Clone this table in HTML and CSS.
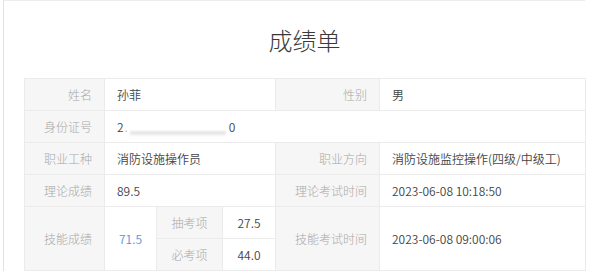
FILE: index.html
```html
<!DOCTYPE html>
<html lang="zh">
<head>
<meta charset="utf-8">
<link rel="stylesheet" href="styles.css">
</head>
<body>
<div class="card">
  <h1 class="title">成绩单</h1>
  <table class="grid">
    <colgroup>
      <col class="c1"><col class="c2"><col class="c3"><col class="c4"><col class="c5"><col class="c6">
    </colgroup>
    <tr>
      <td class="lbl">姓名</td>
      <td class="val" colspan="3">孙菲</td>
      <td class="lbl">性别</td>
      <td class="val">男</td>
    </tr>
    <tr>
      <td class="lbl">身份证号</td>
      <td class="val" colspan="5">2<span class="dot">.</span><span class="blur"></span>0</td>
    </tr>
    <tr>
      <td class="lbl">职业工种</td>
      <td class="val" colspan="3">消防设施操作员</td>
      <td class="lbl">职业方向</td>
      <td class="val">消防设施监控操作(四级/中级工)</td>
    </tr>
    <tr>
      <td class="lbl">理论成绩</td>
      <td class="val" colspan="3">89.5</td>
      <td class="lbl">理论考试时间</td>
      <td class="val">2023-06-08 10:18:50</td>
    </tr>
    <tr>
      <td class="lbl" rowspan="2">技能成绩</td>
      <td class="val center score" rowspan="2">71.5</td>
      <td class="lbl center">抽考项</td>
      <td class="val center">27.5</td>
      <td class="lbl" rowspan="2">技能考试时间</td>
      <td class="val" rowspan="2">2023-06-08 09:00:06</td>
    </tr>
    <tr>
      <td class="lbl center">必考项</td>
      <td class="val center">44.0</td>
    </tr>
  </table>
</div>
</body>
</html>
```

FILE: styles.css
```css
html, body {
  margin: 0;
  padding: 0;
  background: #ffffff;
  overflow: hidden;
}
body {
  font-family: "Noto Sans CJK SC", "Noto Sans", sans-serif;
  color: #333333;
}
.card {
  margin-left: 3px;
  width: 561px;
  border-left: 1px solid #e2e2e2;
  border-top: 1px solid #ececec;
  padding: 0 0 0 20px;
  background: #ffffff;
}
.title {
  margin: 0;
  padding-top: 23px;
  height: 32px;
  margin-bottom: 22px;
  font-size: 24px;
  line-height: 32px;
  font-weight: 300;
  text-align: center;
  color: #3a3a3a;
}
.grid {
  width: 561px;
  border-collapse: collapse;
  table-layout: fixed;
  font-size: 12px;
  font-weight: 300;
}
.c1 { width: 80px; }
.c2 { width: 52px; }
.c3 { width: 66px; }
.c4 { width: 53px; }
.c5 { width: 104px; }
.c6 { width: 206px; }
.grid td {
  border: 1px solid #ebebeb;
  height: 31px;
  padding: 0;
  white-space: nowrap;
  overflow: hidden;
}
.lbl {
  background: #f6f6f6;
  color: #a8a8a8;
  text-align: right;
  padding-right: 12px !important;
}
.val {
  color: #444444;
  font-weight: 350;
  padding-left: 12px !important;
}
.center {
  text-align: center;
  padding-left: 0 !important;
  padding-right: 0 !important;
}
.grid .score {
  color: #5b90e0;
  font-weight: 350;
}
.dot {
  color: #bbbbbb;
  margin-left: 1px;
}
.blur {
  display: inline-block;
  width: 96px;
  height: 4px;
  margin: 0 3px 0 2px;
  background: #e6e6e6;
  filter: blur(1px);
  vertical-align: -3px;
}
```
